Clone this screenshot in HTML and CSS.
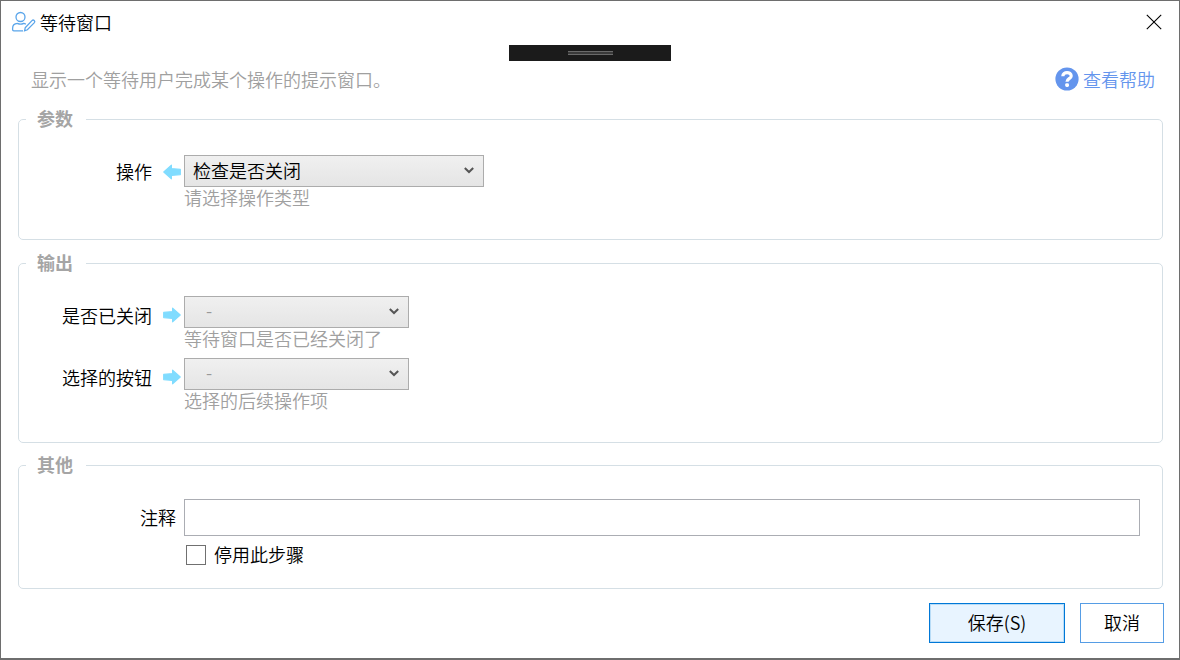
FILE: index.html
```html
<!DOCTYPE html>
<html lang="zh-CN">
<head>
    <meta charset="UTF-8">
    <meta name="viewport" content="width=device-width, initial-scale=1.0">
    <title>等待窗口</title>
    <link rel="stylesheet" href="styles.css">
</head>
<body>
    <div class="window">
        <div class="title-bar">
            <svg class="title-icon" viewBox="0 0 26 22">
                <circle cx="9.5" cy="6" r="4.5"/>
                <path d="M6.4 12.4C3.4 12.6 1.6 14.4 1.6 17.4v1.2c0 .8.4 1.2 1.2 1.2h9.2M6.4 12.4c2 1 4.4 1 6.2 0 .8.1 1.6.4 2.2.9"/>
                <path d="M14.2 16.8l7-7.4c1.2-1.1 3.4.8 2.2 2.2l-7 7.2-2.8 1z"/>
            </svg>
            <h1>等待窗口</h1>
            <svg class="close-icon" viewBox="0 0 16 16">
                <path d="M.8.8l14.4 14.4M15.2.8L.8 15.2"/>
            </svg>
        </div>

        <!-- 顶部拖动条 -->
        <div class="drag-bar"><span class="drag-grip"></span></div>

        <div class="intro">
            <p>显示一个等待用户完成某个操作的提示窗口。</p>
            <a class="help-link">
                <svg class="help-icon" viewBox="0 0 24 24">
                    <circle cx="12" cy="12" r="11.6"/>
                    <path d="M7.8 9.2C7.8 4.4 16.2 4.4 16.2 8.9c0 2.8-4.2 2.8-4.2 5.8"/>
                    <rect x="10.2" y="16.2" width="3.8" height="3.8" rx="1.4"/>
                </svg>
                <span>查看帮助</span>
            </a>
        </div>

        <fieldset class="group group-params">
            <legend>参数</legend>
            <div class="row">
                <div class="label">操作</div>
                <svg class="arrow" viewBox="0 0 18 16"><path d="M.8 8l7.6-6.8v3.4l8.9.8v5.2l-8.9.8v3.4z"/></svg>
                <div class="field">
                    <div class="select wide">
                        <span>检查是否关闭</span>
                        <svg class="chevron" viewBox="0 0 10 7"><path d="M.8 1l4.2 4 4.2-4"/></svg>
                    </div>
                    <div class="hint">请选择操作类型</div>
                </div>
            </div>
        </fieldset>

        <fieldset class="group group-output">
            <legend>输出</legend>
            <div class="row">
                <div class="label">是否已关闭</div>
                <svg class="arrow" viewBox="0 0 18 16"><path d="M17.2 8L9.6 1.2v3.4l-8.9.8v5.2l8.9.8v3.4z"/></svg>
                <div class="field">
                    <div class="select empty">
                        <span>-</span>
                        <svg class="chevron" viewBox="0 0 10 7"><path d="M.8 1l4.2 4 4.2-4"/></svg>
                    </div>
                    <div class="hint">等待窗口是否已经关闭了</div>
                </div>
            </div>
            <div class="row">
                <div class="label">选择的按钮</div>
                <svg class="arrow" viewBox="0 0 18 16"><path d="M17.2 8L9.6 1.2v3.4l-8.9.8v5.2l8.9.8v3.4z"/></svg>
                <div class="field">
                    <div class="select empty">
                        <span>-</span>
                        <svg class="chevron" viewBox="0 0 10 7"><path d="M.8 1l4.2 4 4.2-4"/></svg>
                    </div>
                    <div class="hint">选择的后续操作项</div>
                </div>
            </div>
        </fieldset>

        <fieldset class="group group-other">
            <legend>其他</legend>
            <div class="note-row">
                <label for="note">注释</label>
                <input type="text" id="note" class="note-input">
            </div>
            <label class="check-row">
                <input type="checkbox" class="checkbox">
                <span>停用此步骤</span>
            </label>
        </fieldset>

        <div class="buttons">
            <button class="btn btn-save">保存(S)</button>
            <button class="btn btn-cancel">取消</button>
        </div>
    </div>
</body>
</html>
```

FILE: styles.css
```css
* {
    margin: 0;
    padding: 0;
    box-sizing: border-box;
}

body {
    font-family: 'Noto Sans CJK SC', sans-serif;
    font-size: 18px;
    font-weight: 350;
    line-height: 24px;
    color: #000;
    background: #fff;
}

.window {
    display: flex;
    flex-direction: column;
    width: 1180px;
    height: 660px;
    border: 1px solid #6e6e6e;
    border-bottom-width: 2px;
    background: #fff;
    overflow: hidden;
}

.title-bar {
    display: flex;
    align-items: center;
    height: 43px;
    padding: 0 17px 1px 10px;
}

.title-icon {
    width: 26px;
    height: 22px;
    margin-right: 3px;
    fill: none;
    stroke: #5aa5ea;
    stroke-width: 1.3;
}

.title-bar h1 {
    flex: 1;
    padding-bottom: 1px;
    font-size: 18px;
    font-weight: 350;
}

.close-icon {
    width: 16px;
    height: 16px;
    fill: none;
    stroke: #000;
    stroke-width: 1.1;
}

.drag-bar {
    display: flex;
    justify-content: center;
    width: 162px;
    height: 16px;
    margin: 1px auto 0;
    padding-top: 6px;
    background: #1b1b1b;
}

.drag-grip {
    width: 45px;
    height: 4px;
    border-top: 1px solid #6a6a6a;
    border-bottom: 1px solid #6a6a6a;
    background: #3a3a3a;
}

.intro {
    display: flex;
    justify-content: space-between;
    height: 46px;
    padding: 6px 24px 0 30px;
    color: #a0a0a0;
}

.help-link {
    display: flex;
    height: 24px;
    color: #6495ed;
}

.help-icon {
    width: 24px;
    height: 24px;
    margin-right: 4px;
    fill: #6495ed;
}

.help-icon path {
    fill: none;
    stroke: #fff;
    stroke-width: 3.2;
}

.help-icon rect {
    fill: #fff;
}

.group {
    margin: 0 16px 0 17px;
    border: 1px solid #d5dfe5;
    border-radius: 5px;
}

.group legend {
    height: 24px;
    margin-left: 7px;
    padding: 0 13px 0 11px;
    color: #a5a5a5;
    font-weight: bold;
    line-height: 22px;
}

.group-params {
    height: 133px;
}

.group-params .row {
    margin-top: 24px;
}

.group-output {
    height: 192px;
    margin-top: 11px;
}

.group-output .row {
    margin-top: 8px;
}

.group-output legend + .row {
    margin-top: 21px;
}

.group-other {
    height: 136px;
    margin-top: 10px;
}

.row {
    display: flex;
    height: 54px;
}

.label {
    width: 133px;
    padding-top: 4px;
    text-align: right;
}

.group-output .label {
    padding-top: 7px;
}

.arrow {
    width: 18px;
    height: 16px;
    margin: 9px 3px 0 11px;
    fill: #80dcff;
    stroke: #80dcff;
    stroke-width: 1.2;
    stroke-linejoin: round;
}

.group-output .arrow {
    margin-top: 11px;
}

.select {
    display: flex;
    align-items: center;
    justify-content: space-between;
    width: 225px;
    height: 32px;
    padding: 0 9px 2px 8px;
    border: 1px solid #acacac;
    background: linear-gradient(#f0f0f0, #e5e5e5);
}

.select.wide {
    width: 300px;
}

.select.empty {
    padding-left: 21px;
    color: #999;
}

.select.empty span {
    padding-bottom: 3px;
}

.chevron {
    width: 10px;
    height: 7px;
    fill: none;
    stroke: #555;
    stroke-width: 2;
}

.hint {
    height: 22px;
    color: #a0a0a0;
    line-height: 21px;
}

.note-row {
    display: flex;
    align-items: center;
    margin-top: 22px;
}

.note-row label {
    width: 157px;
    margin-right: 8px;
    padding-bottom: 2px;
    text-align: right;
}

.note-input {
    width: 956px;
    height: 37px;
    padding: 0 6px;
    border: 1px solid #abadb3;
    font: inherit;
}

.check-row {
    display: flex;
    align-items: center;
    width: 140px;
    margin: 6px 0 0 167px;
}

.check-row span {
    padding-bottom: 2px;
}

.checkbox {
    appearance: none;
    width: 20px;
    height: 20px;
    margin-right: 8px;
    border: 1px solid #707070;
    background: #fff;
}

.buttons {
    display: flex;
    justify-content: flex-end;
    gap: 15px;
    padding: 14px 15px 0 0;
}

.btn {
    height: 40px;
    padding-bottom: 2px;
    border: 1px solid #569de5;
    background: #fff;
    color: #000;
    font: inherit;
}

.btn-save {
    width: 136px;
    border-color: #0078d7;
    background: #e8f4ff;
    box-shadow: inset 0 0 0 1px #b8dcf7;
}

.btn-cancel {
    width: 84px;
}
```
